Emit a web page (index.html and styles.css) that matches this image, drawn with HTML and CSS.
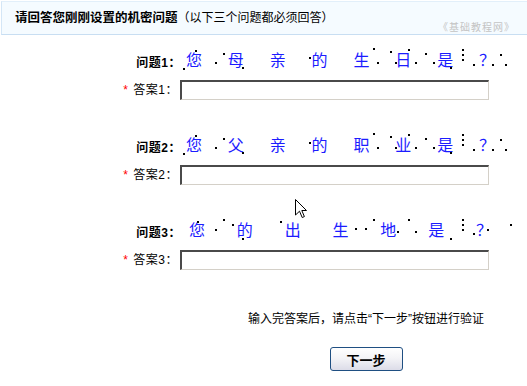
FILE: index.html
```html
<!DOCTYPE html>
<html lang="zh">
<head>
<meta charset="utf-8">
<title>密保问题</title>
<link rel="stylesheet" href="styles.css">
</head>
<body>
<div class="page">
  <div class="header">
    <div class="title"><b>请回答您刚刚设置的机密问题</b>（以下三个问题都必须回答）</div>
    <div class="watermark">《基础教程网》</div>
  </div>

  <div class="main">
    <div class="block">
      <div class="q-row">
        <div class="q-label">问题1：</div>
        <div class="q-text">
          <span>您</span><span>母</span><span>亲</span><span>的</span><span>生</span><span>日</span><span>是</span><span>？</span>
          <i class="dot" style="left:10px;top:24px"></i><i class="dot" style="left:22px;top:6px"></i><i class="dot" style="left:42px;top:18px"></i><i class="dot" style="left:50px;top:9px"></i><i class="dot" style="left:69px;top:23px"></i><i class="dot" style="left:136px;top:13px"></i><i class="dot" style="left:200px;top:4px"></i><i class="dot" style="left:204px;top:18px"></i><i class="dot" style="left:217px;top:7px"></i><i class="dot" style="left:222px;top:18px"></i><i class="dot" style="left:235px;top:5px"></i><i class="dot" style="left:242px;top:18px"></i><i class="dot" style="left:252px;top:9px"></i><i class="dot" style="left:260px;top:18px"></i><i class="dot" style="left:277px;top:23px"></i><i class="dot" style="left:289px;top:5px"></i><i class="dot" style="left:289px;top:10px"></i><i class="dot" style="left:289px;top:15px"></i><i class="dot" style="left:300px;top:20px"></i><i class="dot" style="left:319px;top:20px"></i><i class="dot" style="left:327px;top:10px"></i><i class="dot" style="left:332px;top:20px"></i>
        </div>
      </div>
      <div class="a-row">
        <div class="a-label"><span class="req">*</span>答案1：</div>
        <input class="answer" type="text">
      </div>
    </div>

    <div class="block">
      <div class="q-row">
        <div class="q-label">问题2：</div>
        <div class="q-text">
          <span>您</span><span>父</span><span>亲</span><span>的</span><span>职</span><span>业</span><span>是</span><span>？</span>
          <i class="dot" style="left:10px;top:24px"></i><i class="dot" style="left:22px;top:6px"></i><i class="dot" style="left:42px;top:18px"></i><i class="dot" style="left:50px;top:9px"></i><i class="dot" style="left:69px;top:23px"></i><i class="dot" style="left:136px;top:13px"></i><i class="dot" style="left:200px;top:4px"></i><i class="dot" style="left:204px;top:18px"></i><i class="dot" style="left:217px;top:7px"></i><i class="dot" style="left:222px;top:18px"></i><i class="dot" style="left:235px;top:5px"></i><i class="dot" style="left:242px;top:18px"></i><i class="dot" style="left:252px;top:9px"></i><i class="dot" style="left:260px;top:18px"></i><i class="dot" style="left:277px;top:23px"></i><i class="dot" style="left:289px;top:5px"></i><i class="dot" style="left:289px;top:10px"></i><i class="dot" style="left:289px;top:15px"></i><i class="dot" style="left:300px;top:20px"></i><i class="dot" style="left:319px;top:20px"></i><i class="dot" style="left:327px;top:10px"></i><i class="dot" style="left:332px;top:20px"></i>
        </div>
      </div>
      <div class="a-row">
        <div class="a-label"><span class="req">*</span>答案2：</div>
        <input class="answer" type="text">
      </div>
    </div>

    <div class="block">
      <div class="q-row">
        <div class="q-label">问题3：</div>
        <div class="q-text">
          <span>您</span><span>的</span><span>出</span><span>生</span><span>地</span><span>是</span><span>？</span>
          <i class="dot" style="left:24px;top:7px"></i><i class="dot" style="left:42px;top:15px"></i><i class="dot" style="left:50px;top:5px"></i><i class="dot" style="left:59px;top:10px"></i><i class="dot" style="left:69px;top:24px"></i><i class="dot" style="left:107px;top:7px"></i><i class="dot" style="left:182px;top:14px"></i><i class="dot" style="left:192px;top:14px"></i><i class="dot" style="left:200px;top:5px"></i><i class="dot" style="left:224px;top:17px"></i><i class="dot" style="left:235px;top:5px"></i><i class="dot" style="left:242px;top:17px"></i><i class="dot" style="left:277px;top:24px"></i><i class="dot" style="left:289px;top:5px"></i><i class="dot" style="left:289px;top:10px"></i><i class="dot" style="left:289px;top:15px"></i><i class="dot" style="left:300px;top:19px"></i><i class="dot" style="left:314px;top:15px"></i><i class="dot" style="left:337px;top:10px"></i>
        </div>
      </div>
      <div class="a-row">
        <div class="a-label"><span class="req">*</span>答案3：</div>
        <input class="answer" type="text">
      </div>
    </div>

    <div class="footer">
      <div class="footer-inner">
        <div class="hint">输入完答案后，请点击“下一步”按钮进行验证</div>
        <button class="next" type="button">下一步</button>
      </div>
    </div>
  </div>

  <svg class="cursor" width="13" height="20" viewBox="0 0 13 20" aria-hidden="true">
    <path d="M0.5 0.5 L0.5 16 L4.5 12.2 L7.2 18.5 L9.4 17.6 L6.8 11.5 L11.5 11.5 Z" fill="#fff" stroke="#000" stroke-width="1" stroke-linejoin="miter"/>
  </svg>
</div>
</body>
</html>
```

FILE: styles.css
```css
html, body {
  margin: 0;
  padding: 0;
  background: #fff;
}

body {
  font-family: "Liberation Sans", "Noto Sans CJK SC", sans-serif;
  font-size: 12px;
  color: #000;
}

.page {
  position: relative;
  width: 527px;
  height: 386px;
  overflow: hidden;
}

.header {
  margin: 1px 0 0 1px;
  height: 32px;
  box-sizing: content-box;
  background: #f5fbff;
  border-top: 1px solid #e2effa;
  border-left: 1px solid #d4e6f6;
  border-bottom: 1px solid #c8def2;
  display: flex;
  justify-content: space-between;
  align-items: flex-start;
  padding: 0 12px 0 13px;
}

.title {
  margin-top: 8px;
  font-size: 12px;
  line-height: 16px;
  white-space: nowrap;
}

.title b {
  font-size: 12.5px;
}

.watermark {
  margin-top: 20px;
  font-size: 10px;
  line-height: 12px;
  letter-spacing: 1px;
  color: #c4c4c4;
  white-space: nowrap;
}

.main {
  margin-top: 9px;
  display: flex;
  flex-direction: column;
  gap: 29px;
}

.q-row {
  display: flex;
  align-items: center;
  height: 30px;
}

.q-label {
  width: 181px;
  flex: none;
  text-align: right;
  font-weight: bold;
  letter-spacing: 0.5px;
  margin-top: 4px;
}

.q-text {
  position: relative;
  width: 335px;
  height: 30px;
  margin-left: -8px;
  display: flex;
  align-items: center;
  font-family: "Noto Sans CJK SC", sans-serif;
  font-size: 16px;
  color: #1c1cff;
}

.q-text span {
  flex: 1;
  text-align: center;
  line-height: 20px;
}

.dot {
  position: absolute;
  width: 2px;
  height: 2px;
  background: #000;
}

.a-row {
  display: flex;
  align-items: center;
  margin-top: 6px;
  height: 20px;
}

.a-label {
  width: 178px;
  margin-right: 2px;
  flex: none;
  text-align: right;
  line-height: 16px;
  letter-spacing: 0.5px;
}

.req {
  color: #f00;
  margin-right: 5px;
}

.answer {
  width: 309px;
  height: 20px;
  box-sizing: border-box;
  margin: 0;
  padding: 0 2px;
  border-top: 2px solid #4a4a4a;
  border-left: 2px solid #4a4a4a;
  border-right: 1px solid #d4d0c8;
  border-bottom: 1px solid #d4d0c8;
  background: #fff;
  outline: none;
}

.footer {
  display: flex;
  justify-content: flex-end;
  padding-right: 43px;
  margin-top: 13px;
}

.footer-inner {
  display: flex;
  flex-direction: column;
  align-items: center;
}

.hint {
  line-height: 14px;
  white-space: nowrap;
}

.next {
  margin-top: 21px;
  width: 73px;
  height: 24px;
  box-sizing: border-box;
  border: 1px solid #1f4f82;
  border-radius: 3px;
  background: linear-gradient(#ffffff 0%, #f4f4f7 45%, #dcdce8 100%);
  font-family: "Liberation Sans", "Noto Sans CJK SC", sans-serif;
  font-size: 13px;
  font-weight: bold;
  color: #000;
  padding: 0;
}

.cursor {
  position: absolute;
  left: 295px;
  top: 199px;
}
```
